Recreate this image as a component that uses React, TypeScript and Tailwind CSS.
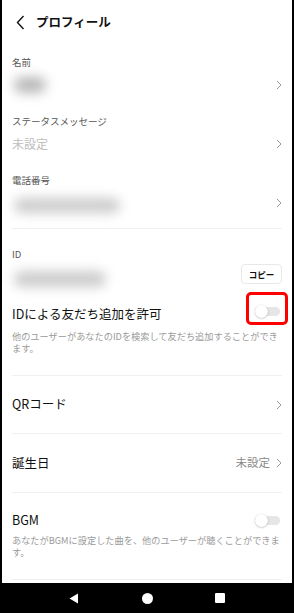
import type { ReactNode } from "react";

const font = { fontFamily: '"Noto Sans CJK JP", "Noto Sans", sans-serif' };

function Chevron({ className = "" }: { className?: string }) {
  return (
    <svg width="6" height="10" viewBox="0 0 6 10" className={className}>
      <path d="M1 1l4 4-4 4" fill="none" stroke="#9a9a9a" strokeWidth="1" />
    </svg>
  );
}

function Toggle() {
  return (
    <div className="relative h-[12px] w-[26px]">
      <div className="absolute left-[6px] top-[2px] h-[9px] w-[19px] rounded-full bg-[#e6e6e6]" />
      <div className="absolute left-0 top-0 h-[13px] w-[13px] rounded-full bg-white shadow-[0_0.5px_2px_rgba(0,0,0,0.3)]" />
    </div>
  );
}

function Blur({ w, h, tint = "bg-[#c9c9c9]" }: { w: string; h: string; tint?: string }) {
  return <div className={`${w} ${h} ${tint} rounded-full blur-[6px]`} />;
}

function Field({ label, children }: { label: string; children: ReactNode }) {
  return (
    <div className="pb-[18px]">
      <div className="h-[14px] text-[9.5px] leading-[14px] text-[#555]">{label}</div>
      <div className="mt-[5px] flex h-[22px] items-center justify-between">
        {children}
        <Chevron />
      </div>
    </div>
  );
}

function Divider() {
  return <div className="h-px bg-[#f0f0f0]" />;
}

export default function App() {
  return (
    <div className="flex h-[613px] w-[294px] flex-col bg-white" style={font}>
      <div className="flex flex-1 flex-col border-x-2 border-black px-[10px]">
        <header className="flex h-[44px] items-center gap-[11px] pl-[4px]">
          <svg width="9" height="15" viewBox="0 0 9 15">
            <path d="M7.5 1L1.5 7.5l6 6.5" fill="none" stroke="#111" strokeWidth="1.4" />
          </svg>
          <h1 className="text-[12.5px] font-bold text-[#111]">プロフィール</h1>
        </header>

        <div className="pt-[11px]">
          <Field label="名前">
            <div className="pl-[2px]">
              <Blur w="w-[32px]" h="h-[16px]" tint="bg-[#b8b8b8]" />
            </div>
          </Field>
          <Field label="ステータスメッセージ">
            <span className="text-[12px] text-[#bdbdbd]">未設定</span>
          </Field>
          <div className="pb-[14px]">
            <div className="h-[14px] text-[9.5px] leading-[14px] text-[#555]">電話番号</div>
            <div className="mt-[5px] flex h-[22px] items-center justify-between">
              <div className="pl-[2px] pt-[4px]">
                <Blur w="w-[106px]" h="h-[15px]" tint="bg-[#cccccc]" />
              </div>
              <Chevron />
            </div>
          </div>
        </div>
        <Divider />

        <div className="pt-[18px]">
          <div className="h-[14px] text-[9.5px] leading-[14px] text-[#555]">ID</div>
          <div className="mt-[3px] flex h-[20px] items-center justify-between">
            <div className="pl-[2px] pt-[10px]">
              <Blur w="w-[92px]" h="h-[16px]" tint="bg-[#cccccc]" />
            </div>
            <button
              type="button"
              className="h-[20px] w-[41px] rounded-[4px] border border-[#e8e8e8] bg-white text-[8.5px] font-bold text-[#111]"
            >
              コピー
            </button>
          </div>
          <div className="relative mt-[20px] flex h-[20px] items-center justify-between">
            <span className="text-[12.5px] text-[#111]">IDによる友だち追加を許可</span>
            <div className="-mt-[6px] mr-[1px]">
              <Toggle />
            </div>
            <div className="absolute right-[-6px] top-[-12px] h-[33px] w-[42px] rounded-[5px] border-[3px] border-[#ff0000]" />
          </div>
          <p className="mt-[7px] pb-[21px] text-[9.2px] leading-[11.5px] text-[#9a9a9a]">
            他のユーザーがあなたのIDを検索して友だち追加することができます。
          </p>
        </div>
        <Divider />

        <div className="flex h-[57px] items-center justify-between">
          <span className="text-[12.5px] text-[#111]">QRコード</span>
          <Chevron />
        </div>
        <Divider />

        <div className="flex h-[58px] items-center justify-between">
          <span className="text-[12.5px] text-[#111]">誕生日</span>
          <div className="flex items-center gap-[6px]">
            <span className="text-[11.5px] text-[#8a8a8a]">未設定</span>
            <Chevron />
          </div>
        </div>
        <Divider />

        <div className="pt-[17px]">
          <div className="flex h-[20px] items-center justify-between">
            <span className="text-[12.5px] text-[#111]">BGM</span>
            <div className="mr-[1px]">
              <Toggle />
            </div>
          </div>
          <p className="mt-[4px] pb-[21px] text-[9.2px] leading-[12px] text-[#9a9a9a]">
            あなたがBGMに設定した曲を、他のユーザーが聴くことができます。
          </p>
        </div>
        <Divider />
      </div>

      <nav className="flex h-[30px] items-center justify-between bg-black px-[69px]">
        <svg width="10" height="11" viewBox="0 0 10 11">
          <path d="M9 0.5v10L0.5 5.5z" fill="#fff" />
        </svg>
        <div className="h-[11px] w-[11px] rounded-full bg-white" />
        <div className="h-[10px] w-[10px] rounded-[1px] bg-white" />
      </nav>
    </div>
  );
}
